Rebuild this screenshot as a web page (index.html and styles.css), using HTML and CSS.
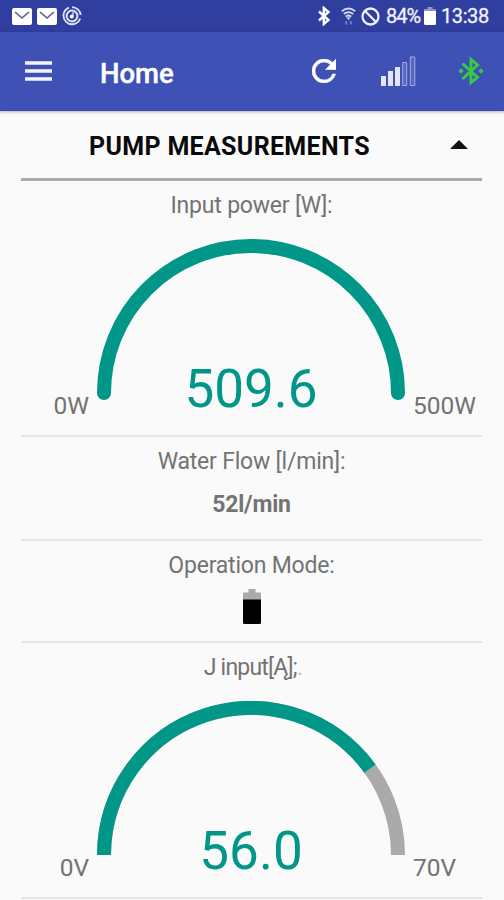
FILE: index.html
```html
<!DOCTYPE html>
<html lang="en">
<head>
    <meta charset="UTF-8">
    <meta name="viewport" content="width=device-width, initial-scale=1.0">
    <title>Home</title>
    <link rel="stylesheet" href="styles.css">
</head>
<body>
    <div class="status-bar">
        <svg class="mail" width="20" height="17" viewBox="0 0 20 17">
            <rect width="20" height="17" rx="2" fill="#fff"/>
            <path d="M3 4l7 6 7-6" fill="none" stroke="#56608f" stroke-width="1.6"/>
        </svg>
        <svg class="mail" width="20" height="17" viewBox="0 0 20 17">
            <rect width="20" height="17" rx="2" fill="#fff"/>
            <path d="M3 4l7 6 7-6" fill="none" stroke="#56608f" stroke-width="1.6"/>
        </svg>
        <svg class="target" width="20" height="20" viewBox="0 0 20 20" fill="none" stroke="#dfe3f7">
            <path d="M7 1.6A8.6 8.6 0 1 0 18.2 12.5M10 1.2A8.8 8.8 0 0 1 18.7 9" stroke-width="1.8"/>
            <circle cx="10" cy="10" r="5.4" stroke-width="2"/>
            <circle cx="9.8" cy="10.4" r="2" fill="#fff" stroke="none"/>
            <path d="M11 10V6" stroke-width="1.3"/>
        </svg>
        <svg class="bt" width="12" height="20" viewBox="0 0 12 20">
            <path d="M1 5.5l9.5 8.5-4.7 4V2l4.7 4L1 14.5" fill="none" stroke="#fff" stroke-width="2.4"/>
        </svg>
        <svg class="wifi" width="15" height="19" viewBox="0 0 15 19" fill="none" stroke="#d5daf3" stroke-width="1.8">
            <path d="M.8 4.2q6.7-5.4 13.4 0M2.8 7q4.7-3.8 9.4 0M4.8 9.6q2.7-2.2 5.4 0"/>
            <path d="M5.2 10.500h4.600L7.500 13z" fill="#d5daf3" stroke="none"/>
            <path d="M5.2 14v3.5M9.8 14v3.5" stroke="#7582d2"/>
        </svg>
        <svg class="block" width="19" height="19" viewBox="0 0 19 19" fill="none" stroke="#eef0fb" stroke-width="2.3">
            <circle cx="9.5" cy="9.5" r="8"/>
            <path d="M4 4l11 11"/>
        </svg>
        <span class="percent">84%</span>
        <svg class="phone-battery" width="12" height="18" viewBox="0 0 12 18">
            <path d="M3.5 0h5v2H12v3H0V2h3.5z" fill="#8b94cf"/>
            <path d="M0 4h12v12.500q0 1.500-1.500 1.500h-9Q0 18 0 16.500z" fill="#fff"/>
        </svg>
        <span class="clock">13:38</span>
    </div>

    <div class="toolbar">
        <svg class="menu" width="27" height="20" viewBox="0 0 27 20">
            <path d="M0 2h27M0 10h27M0 18h27" stroke="#f3f5fd" stroke-width="3.4"/>
        </svg>
        <h1>Home</h1>
        <svg class="refresh" width="24" height="24" viewBox="4 4 16 16">
            <path d="M17.650 6.350A7.958 7.958 0 0 0 12 4a8 8 0 1 0 7.730 10h-2.080A5.990 5.990 0 0 1 12 18a6 6 0 1 1 0-12c1.660 0 3.140.690 4.220 1.780L13 11h7V4z" fill="#fff" stroke="#fff" stroke-width=".4"/>
        </svg>
        <svg class="signal" width="35" height="31" viewBox="0 0 35 31">
            <path d="M0 20h5v10H0zM7 15h5v15H7zM14 11h5v19h-5z" fill="#e2e6f8"/>
            <path d="M21.700 6.500h4v23h-4zM29.300 1h4.500v28.500h-4.500z" fill="#5868c2" stroke="#a3addf"/>
        </svg>
        <svg class="bt-green" width="26" height="30" viewBox="0 0 26 30">
            <path d="M4.500 7.500L19.500 21.500 13 26.500V3.500l6.500 5.500L4.500 23" fill="none" stroke="#35cb43" stroke-width="2.900"/>
            <path d="M3 12.300L5.700 15 3 17.700.3 15zM23 12.300l2.700 2.700-2.700 2.700-2.700-2.700z" fill="#35cb43"/>
        </svg>
    </div>

    <div class="content">
        <div class="group-title">
            <h2>PUMP MEASUREMENTS</h2>
            <svg width="18" height="9" viewBox="0 0 18 9"><path d="M0 9l9-9 9 9z" fill="#111"/></svg>
        </div>

        <div class="row power">
            <p class="label power-label">Input power [W]:</p>
            <div class="gauge">
                <span class="min">0W</span>
                <svg width="308" height="162" viewBox="0 0 308 162">
                    <path d="M7 154A147 147 0 0 1 301 154" fill="none" stroke="#009688" stroke-width="14" stroke-linecap="round"/>
                </svg>
                <span class="value">509.6</span>
                <span class="max">500W</span>
            </div>
        </div>

        <div class="row flow">
            <p class="label flow-label">Water Flow [l/min]:</p>
            <p class="reading">52l/min</p>
        </div>

        <div class="row mode">
            <p class="label mode-label">Operation Mode:</p>
            <svg width="18" height="35" viewBox="0 0 18 35">
                <path d="M5.500 0h7v3.500H17q1 0 1 1V12H0V4.500q0-1 1-1h4.500z" fill="#aaa"/>
                <path d="M0 10.500h18V33.500q0 1.500-1.500 1.500h-15Q0 35 0 33.500z" fill="#000"/>
            </svg>
        </div>

        <div class="row current">
            <p class="label current-label">J input[Ą];<span class="faint">.</span></p>
            <div class="gauge">
                <span class="min">0V</span>
                <svg width="308" height="162" viewBox="0 0 308 162">
                    <path d="M7 154A147 147 0 0 1 301 154" fill="none" stroke="#aaa" stroke-width="14"/>
                    <path d="M7 154A147 147 0 0 1 272.930 67.600" fill="none" stroke="#009688" stroke-width="14"/>
                </svg>
                <span class="value">56.0</span>
                <span class="max">70V</span>
            </div>
        </div>
    </div>
</body>
</html>
```
FILE: styles.css
```css
* {
    box-sizing: border-box;
}
body {
    margin: 0;
    height: 900px;
    overflow: hidden;
    font-family: Roboto, sans-serif;
    background-color: #fafafa;
    color: #737373;
}
h1, h2, p {
    margin: 0;
}
svg {
    display: block;
    flex: none;
}
.status-bar {
    display: flex;
    align-items: center;
    height: 32px;
    padding-left: 12px;
    background-color: #303f9f;
    color: #f0f2fc;
    font-size: 20px;
    line-height: 32px;
}
.mail {
    margin-right: 5px;
}
.bt {
    margin-left: 236px;
}
.wifi {
    margin-left: 11px;
}
.block {
    margin-left: 5px;
}
.percent {
    width: 33px;
    margin-left: 6px;
    letter-spacing: -1px;
}
.phone-battery {
    margin-left: 5px;
}
.clock {
    margin-left: 5px;
    letter-spacing: -0.4px;
}
.percent, .clock {
    -webkit-text-stroke: 0.3px #f0f2fc;
}
.toolbar {
    display: flex;
    align-items: center;
    height: 79px;
    padding-left: 25px;
    border-bottom: 1px solid #3949a5;
    background-color: #3f51b5;
    box-shadow: 0 1px 3px rgba(0, 0, 0, 0.3);
}
.toolbar h1 {
    width: 212px;
    margin-left: 48px;
    padding-top: 4px;
    color: #fff;
    font-size: 27.500px;
    font-weight: 500;
    -webkit-text-stroke: 0.4px #fff;
}
.signal {
    margin-left: 45px;
}
.bt-green {
    margin-left: 42px;
}
.content {
    width: 461px;
    margin-left: 21px;
}
.group-title {
    display: flex;
    align-items: center;
    height: 70px;
    padding: 0 14px 0 68px;
    border-bottom: 3px solid #aaa;
    justify-content: space-between;
}
h2 {
    padding-top: 3px;
    color: #0a0a0a;
    font-size: 25px;
    font-weight: 700;
    letter-spacing: 0.32px;
    white-space: nowrap;
}
.row {
    display: flex;
    flex-direction: column;
    align-items: center;
    border-bottom: 2px solid #e5e5e5;
}
.power {
    height: 256px;
}
.flow {
    height: 104px;
}
.mode {
    height: 102px;
}
.current {
    height: 256px;
}
.label {
    height: 46px;
    font-size: 23px;
    letter-spacing: -0.2px;
    line-height: 49px;
    white-space: pre;
}
.current-label {
    padding-left: 3px;
    letter-spacing: -0.8px;
}
.gauge {
    display: grid;
    grid-template-columns: 69px 308px 1fr;
    column-gap: 8px;
    width: 100%;
    margin-top: 12px;
    margin-left: -2px;
    line-height: 30px;
    font-size: 24.500px;
}
.gauge svg, .value {
    grid-column: 2;
    grid-row: 1;
}
.min, .max {
    grid-row: 1;
    margin-bottom: -20px;
    align-self: end;
}
.min {
    grid-column: 1;
    text-align: right;
}
.max {
    grid-column: 3;
}
.value {
    align-self: end;
    color: #009688;
    font-size: 53px;
    line-height: 60px;
    margin-bottom: -18px;
    text-align: center;
}
.reading {
    font-size: 23px;
    font-weight: 700;
    letter-spacing: -0.2px;
    line-height: 44px;
}
.mode svg {
    margin-top: 2px;
}
.faint {
    opacity: 0.4;
}
```
